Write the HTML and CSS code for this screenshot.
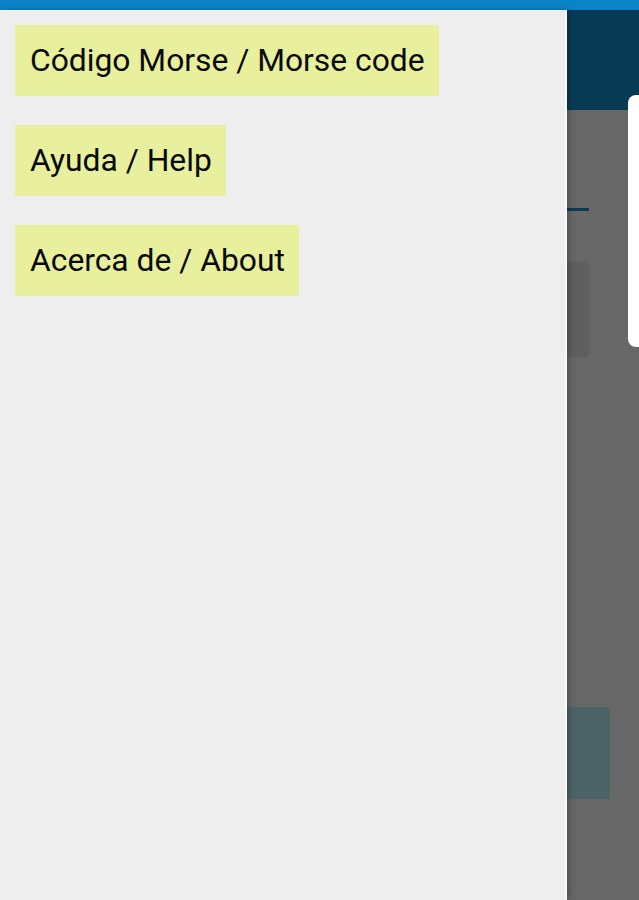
FILE: index.html
```html
<!DOCTYPE html>
<html lang="es">
<head>
    <meta charset="UTF-8">
    <meta name="viewport" content="width=device-width, initial-scale=1.0">
    <link rel="stylesheet" href="styles.css">
    <title>Código Morse</title>
</head>
<body>
    <div class="screen">
        <div class="status-bar"></div>
        <div class="main">
            <nav class="drawer">
                <a class="drawer-item" href="#">Código Morse / Morse code</a>
                <a class="drawer-item" href="#">Ayuda / Help</a>
                <a class="drawer-item" href="#">Acerca de / About</a>
            </nav>
            <div class="backdrop">
                <div class="toolbar"></div>
                <div class="tab-line"></div>
                <div class="input-card"></div>
                <div class="action-block"></div>
                <!-- dialog peeking in from the right edge -->
                <div class="dialog"></div>
            </div>
        </div>
    </div>
</body>
</html>
```

FILE: styles.css
```css
body {
    margin: 0;
    font-family: Roboto, "Noto Sans", sans-serif;
    background: #676767;
}

.screen {
    display: flex;
    flex-direction: column;
    height: 900px;
    overflow: hidden;
}

.status-bar {
    height: 10px;
    background: #0a84c6;
    flex-shrink: 0;
}

.main {
    display: flex;
    flex: 1;
}

.drawer {
    width: 567px;
    flex-shrink: 0;
    background: #eeeeee;
    border-right: 2px solid #f8f8f8;
    padding: 15px 0 0 15px;
    box-sizing: border-box;
    display: flex;
    flex-direction: column;
    align-items: flex-start;
    gap: 29px;
    position: relative;
    z-index: 2;
    box-shadow: 2px 0 6px rgba(0, 0, 0, 0.25);
}

.drawer-item {
    display: block;
    height: 71px;
    line-height: 71px;
    padding: 0 14px 0 15px;
    background: #e8f09e;
    color: #0a0a0a;
    font-size: 31.8px;
    text-decoration: none;
}

.backdrop {
    flex: 1;
    position: relative;
    background: #676767;
}

.toolbar {
    height: 100px;
    background: #073a55;
}

.tab-line {
    width: 22px;
    height: 3px;
    margin-top: 98px;
    background: #0d3a52;
}

.input-card {
    width: 22px;
    height: 95px;
    margin-top: 51px;
    background: #5f5f5f;
    border-radius: 0 4px 4px 0;
}

.action-block {
    width: 43px;
    height: 92px;
    margin-top: 350px;
    background: #4c6467;
}

.dialog {
    position: absolute;
    top: 85px;
    left: 61px;
    width: 40px;
    height: 252px;
    background: #ffffff;
    border-radius: 8px;
}
```
